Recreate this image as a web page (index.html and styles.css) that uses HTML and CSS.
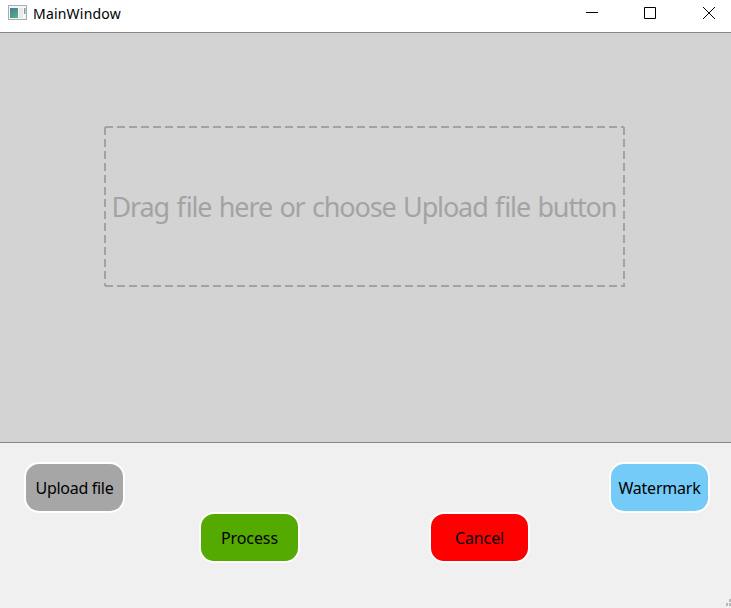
FILE: index.html
```html
<!DOCTYPE html>
<html lang="en">
<head>
<meta charset="utf-8">
<title>MainWindow</title>
<link rel="stylesheet" href="styles.css">
</head>
<body>
<header class="titlebar">
  <svg class="app-icon" width="20" height="16" viewBox="0 0 20 16">
    <defs><linearGradient id="g" x1="0" y1="0" x2=".6" y2="1"><stop offset="0" stop-color="#4a789c"/><stop offset="1" stop-color="#55ad80"/></linearGradient></defs>
    <rect x=".5" y=".5" width="18" height="14" fill="#f5f6f7" stroke="#a9adb1"/>
    <rect x="2" y="3" width="8" height="10" fill="url(#g)"/>
    <rect x="11" y="3" width="4" height="10" fill="#e9eaeb"/>
    <rect x="16" y="3" width="1.500" height="6" fill="#72aaa0"/>
  </svg>
  <h1 class="title">MainWindow</h1>
  <svg class="controls" width="128" height="14" viewBox="0 0 128 14" fill="none" stroke="#000">
    <path d="M0 6.500H12M58.500 1.500H69.500V12.500H58.500ZM117 1L129 13M129 1L117 13"/>
  </svg>
</header>
<main class="workspace">
  <div class="dropzone">
    <svg class="dashes" width="521" height="161" viewBox="0 0 521 161" fill="none" stroke="#a3a3a3" stroke-width="2">
      <path stroke-dasharray="8 4" d="M1 1H520M1 160H521M1 1V160M520 1V160"/>
    </svg>
    <p class="prompt"><svg class="text" width="521" height="40"><text x="7.500" y="30" textLength="506">Drag file here or choose Upload file button</text></svg></p>
  </div>
</main>
<footer class="actions">
  <button class="btn upload">Upload file</button>
  <button class="btn process">Process</button>
  <button class="btn cancel">Cancel</button>
  <button class="btn watermark">Watermark</button>
  <svg class="grip" width="5" height="9" viewBox="0 0 5 9" fill="#b8b8b8"><path d="M3 0h2v3H3zM0 4h2v3H0zM3 4h2v3H3z"/></svg>
</footer>
</body>
</html>
```
FILE: styles.css
```css
* { box-sizing: border-box; }
body { margin: 0; height: 608px; display: flex; flex-direction: column; background: #f0f0f0; font-family: "Noto Sans", sans-serif; }
.titlebar { height: 32px; background: #fff; display: flex; padding: 5px 17px 0 8px; }
.title { margin: -1px 0 0 5px; font-size: 14px; line-height: 20px; font-weight: 400; letter-spacing: .2px; }
.controls { margin: 1px 0 0 auto; overflow: visible; }
.workspace { height: 411px; border: solid #828790; border-width: 1px 0; background: #d3d3d3; padding: 93px 0 0 104px; }
.dropzone { width: 521px; height: 161px; display: grid; }
.dashes, .prompt { grid-area: 1 / 1; }
.prompt { margin: 61px 0 0; }
.text { display: block; font-size: 27px; word-spacing: 1.5px; fill: #a3a3a3; }
.actions { position: relative; height: 165px; padding: 19px 21px 0 24px; display: grid; grid-template-columns: 175px 230px 180px 101px; }
.btn { width: 101px; height: 51px; padding: 0; border: 2px solid #fff; border-radius: 15px; font: 16px "Noto Sans", sans-serif; color: #000; letter-spacing: -.2px; }
.upload { background: #a6a6a6; letter-spacing: -.3px; }
.process { background: #55aa00; margin-top: 50px; letter-spacing: -.1px; }
.cancel { background: #f00; margin-top: 50px; letter-spacing: -.1px; }
.watermark { background: #74cbf7; }
.grip { position: absolute; right: 0; bottom: 0; }
```
